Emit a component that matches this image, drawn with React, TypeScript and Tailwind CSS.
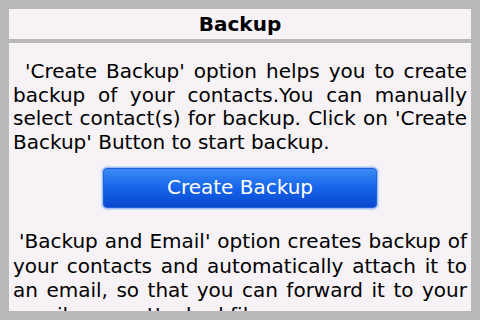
import React from "react";

export default function App() {
  return (
    <div
      className="w-[480px] h-[320px] bg-[#b9b8ba] p-[9px] flex flex-col gap-[4px] overflow-hidden"
      style={{ fontFamily: '"DejaVu Sans", sans-serif' }}
    >
      <div className="h-[30px] shrink-0 bg-[#f6f2f6] flex items-center justify-center">
        <span className="text-[20px] font-bold text-black leading-none">Backup</span>
      </div>
      <div className="flex-1 bg-[#f6f2f6] overflow-hidden px-[4px] pt-[17px] text-[20px] leading-[23.5px] text-black">
        <p className="text-justify indent-[12px]">
          'Create Backup' option helps you to create backup of your contacts.You can manually select contact(s) for backup. Click on 'Create Backup' Button to start backup.
        </p>
        <div className="mt-[13px] mb-[20px] flex justify-center">
          <div className="w-[276px] h-[42px] rounded-[5px] p-[1px] bg-[#9ec0f6] shadow-[0_0_1px_1px_#c8dcfa]">
            <div className="w-full h-full rounded-[4px] bg-gradient-to-b from-[#3a8af4] via-[#1664ea] to-[#0a48cf] border border-[#1f5fd8] flex items-center justify-center text-white text-[20px]">
              Create Backup
            </div>
          </div>
        </div>
        <p className="text-justify indent-[6px] leading-[24.5px]">
          'Backup and Email' option creates backup of your contacts and automatically attach it to an email, so that you can forward it to your email as an attached file.
        </p>
      </div>
    </div>
  );
}
